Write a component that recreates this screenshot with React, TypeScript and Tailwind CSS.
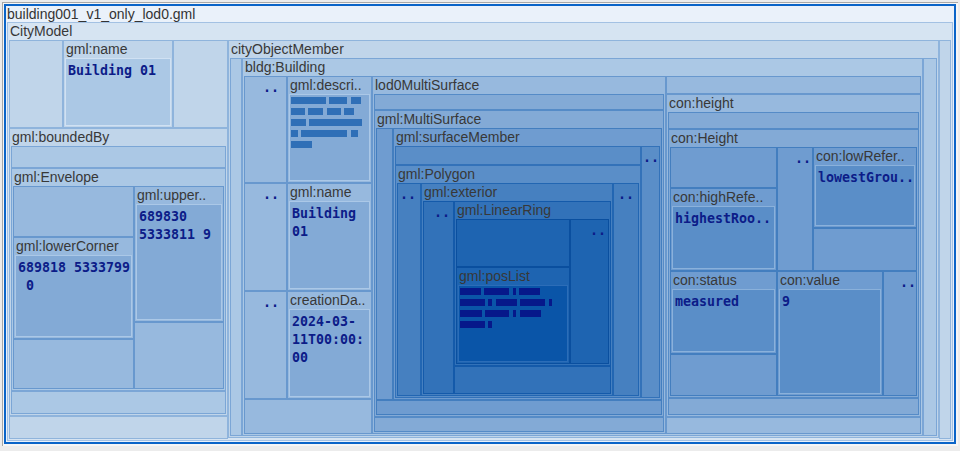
import type { ReactNode } from 'react';

// background / border per nesting depth
const BG = [
  'bg-[#eaf1fa]',
  'bg-[#d6e4f2]',
  'bg-[#c0d5ea]',
  'bg-[#abc8e5]',
  'bg-[#97b9de]',
  'bg-[#83aad6]',
  'bg-[#6f9cd0]',
  'bg-[#5a8ec8]',
  'bg-[#4680c0]',
  'bg-[#3272b9]',
  'bg-[#1e64b1]',
  'bg-[#0a55a8]',
];
const BD = [
  'border-[#0a64c8]',
  'border-[#a3c1e3]',
  'border-[#8fb4dc]',
  'border-[#7ba6d6]',
  'border-[#6898ce]',
  'border-[#558bc7]',
  'border-[#437ebf]',
  'border-[#3372b9]',
  'border-[#2266b2]',
  'border-[#145aaa]',
  'border-[#0a4f9f]',
  'border-[#2a6cb8]',
];
// value boxes get a lighter edge
const VB: Record<number, string> = {
  3: 'border-[#d0e1f3]',
  5: 'border-[#abc8e7]',
  7: 'border-[#8ab1db]',
  11: 'border-[#2c6db8]',
};

const mono = "font-['DejaVu_Sans_Mono',monospace] text-[13.3px] font-bold leading-[18px] text-[#0c1c88]";

function Box({
  d,
  label,
  row = false,
  className = '',
  children,
}: {
  d: number;
  label: string;
  row?: boolean;
  className?: string;
  children?: ReactNode;
}) {
  return (
    <div className={`flex min-h-0 min-w-0 flex-col overflow-hidden border ${BG[d]} ${BD[d]} ${className}`}>
      <div className="h-[17px] overflow-hidden whitespace-nowrap pl-[2px] text-[14px] leading-[17px] text-[#383838]">
        {label}
      </div>
      <div className={`flex min-h-0 flex-1 px-px pb-px ${row ? 'flex-row' : 'flex-col'}`}>{children}</div>
    </div>
  );
}

function Empty({ d, className = '' }: { d: number; className?: string }) {
  return <div className={`min-h-0 min-w-0 border ${BG[d]} ${BD[d]} ${className}`} />;
}

function Dots({ d, className = '', pr = 'pr-[3px]' }: { d: number; className?: string; pr?: string }) {
  return (
    <div className={`flex min-w-0 justify-end overflow-hidden border pt-[2px] ${pr} ${mono} ${BG[d]} ${BD[d]} ${className}`}>
      ..
    </div>
  );
}

function Value({ d, children }: { d: number; children: ReactNode }) {
  return (
    <div className={`min-h-0 flex-1 overflow-hidden whitespace-pre border px-[2px] pt-[3px] ${mono} ${BG[d]} ${VB[d]}`}>
      {children}
    </div>
  );
}

// long text drawn as blocks, the way the map shows it when it is too small
function Greek({ d, rows, color }: { d: number; rows: number[][][]; color: string }) {
  return (
    <div className={`min-h-0 flex-1 overflow-hidden border ${BG[d]} ${VB[d]}`}>
      <svg width="120" height="60" className="block">
        {rows.map((r, i) =>
          r.map(([x, w]) => <rect key={`${i}-${x}`} x={x} y={2 + i * 11} width={w} height={7} fill={color} />),
        )}
      </svg>
    </div>
  );
}

const descRows = [
  [[1, 35], [39, 18], [61, 10]],
  [[1, 14], [18, 15], [37, 14], [54, 10]],
  [[1, 15], [19, 53]],
  [[1, 7], [11, 46], [61, 7]],
  [[1, 21]],
];

const posRows = [
  [[1, 21], [25, 25], [54, 3], [60, 21]],
  [[1, 25], [29, 4], [37, 21], [61, 25], [90, 3]],
  [[1, 22], [26, 24], [54, 3], [61, 21]],
  [[1, 25], [29, 4]],
];

export default function App() {
  return (
    <div className="h-[451px] w-[960px] overflow-hidden bg-[#ececec] pl-[2px] pt-[2px] font-['Liberation_Sans',Arial,sans-serif]">
      <div className="h-[444px] w-[956px] border-l border-t border-[#a8a8a8] bg-[#f6f6f6] pl-px pt-px">
        <div className="flex h-[440px] w-[952px] flex-col border-2 border-[#0a64c8] bg-[#eaf1fa]">
          <div className="h-[16px] pl-px text-[14px] leading-[16px] text-[#333]">building001_v1_only_lod0.gml</div>
          <div className="flex min-h-0 flex-1 px-px pb-px">
            <Box d={1} label="CityModel" row className="flex-1">
              {/* left column */}
              <div className="flex w-[219px] flex-col">
                <div className="flex h-[88px]">
                  <Empty d={2} className="w-[54px]" />
                  <Box d={2} label="gml:name" className="w-[110px]">
                    <Value d={3}>Building 01</Value>
                  </Box>
                  <Empty d={2} className="flex-1" />
                </div>
                <Box d={2} label="gml:boundedBy" className="h-[288px]">
                  <Empty d={3} className="h-[22px]" />
                  <Box d={3} label="gml:Envelope" row className="h-[223px]">
                    <div className="flex w-[121px] flex-col">
                      <Empty d={4} className="h-[51px]" />
                      <Box d={4} label="gml:lowerCorner" className="h-[102px]">
                        <Value d={5}>{'689818 5333799\n 0'}</Value>
                      </Box>
                      <Empty d={4} className="flex-1" />
                    </div>
                    <div className="flex min-w-0 flex-1 flex-col">
                      <Box d={4} label="gml:upper.." className="h-[136px]">
                        <Value d={5}>{'689830\n5333811 9'}</Value>
                      </Box>
                      <Empty d={4} className="flex-1" />
                    </div>
                  </Box>
                  <Empty d={3} className="flex-1" />
                </Box>
                <Empty d={2} className="flex-1" />
              </div>

              {/* cityObjectMember */}
              <div className="flex w-[711px] flex-col">
                <Box d={2} label="cityObjectMember" row className="h-[398px]">
                  <Empty d={3} className="w-[12px]" />
                  <Box d={3} label="bldg:Building" row className="w-[681px]">
                    <div className="flex w-[128px] flex-col">
                      <div className="flex h-[107px]">
                        <Dots d={4} className="w-[43px]" pr="pr-[7px]" />
                        <Box d={4} label="gml:descri.." className="flex-1">
                          <Greek d={5} rows={descRows} color="#2f6fb7" />
                        </Box>
                      </div>
                      <div className="flex h-[108px]">
                        <Dots d={4} className="w-[43px]" pr="pr-[7px]" />
                        <Box d={4} label="gml:name" className="flex-1">
                          <Value d={5}>{'Building\n01'}</Value>
                        </Box>
                      </div>
                      <div className="flex h-[108px]">
                        <Dots d={4} className="w-[43px]" pr="pr-[7px]" />
                        <Box d={4} label="creationDa.." className="flex-1">
                          <Value d={5}>{'2024-03-\n11T00:00:\n00'}</Value>
                        </Box>
                      </div>
                      <Empty d={4} className="flex-1" />
                    </div>

                    <Box d={4} label="lod0MultiSurface" className="w-[294px]">
                      <Empty d={5} className="h-[16px]" />
                      <Box d={5} label="gml:MultiSurface" className="h-[307px]">
                        <div className="flex h-[272px]">
                          <Empty d={6} className="w-[17px]" />
                          <Box d={6} label="gml:surfaceMember" row className="flex-1">
                            <div className="flex w-[246px] flex-col">
                              <Empty d={7} className="h-[19px]" />
                              <Box d={7} label="gml:Polygon" row className="flex-1">
                                <Dots d={8} className="w-[24px]" pr="pr-[4px]" />
                                <Box d={8} label="gml:exterior" row className="w-[192px]">
                                  <Dots d={9} className="w-[31px]" pr="pr-[3px]" />
                                  <div className="flex min-w-0 flex-1 flex-col">
                                    <Box d={9} label="gml:LinearRing" row className="h-[165px]">
                                      <div className="flex w-[114px] flex-col">
                                        <Empty d={10} className="h-[48px]" />
                                        <Box d={10} label="gml:posList" className="flex-1">
                                          <Greek d={11} rows={posRows} color="#06188a" />
                                        </Box>
                                      </div>
                                      <Dots d={10} className="flex-1" pr="pr-[2px]" />
                                    </Box>
                                    <Empty d={9} className="flex-1" />
                                  </div>
                                </Box>
                                <Dots d={8} className="flex-1" pr="pr-[4px]" />
                              </Box>
                            </div>
                            <Dots d={7} className="flex-1" pr="pr-0" />
                          </Box>
                        </div>
                        <Empty d={6} className="flex-1" />
                      </Box>
                      <Empty d={5} className="flex-1" />
                    </Box>

                    <div className="flex min-w-0 flex-1 flex-col">
                      <Empty d={4} className="h-[18px]" />
                      <Box d={4} label="con:height" className="h-[323px]">
                        <Empty d={5} className="h-[17px]" />
                        <Box d={5} label="con:Height" className="h-[269px]">
                          <div className="flex h-[124px]">
                            <div className="flex w-[107px] flex-col">
                              <Empty d={6} className="h-[41px]" />
                              <Box d={6} label="con:highRefe.." className="flex-1">
                                <Value d={7}>highestRoo..</Value>
                              </Box>
                            </div>
                            <Dots d={6} className="w-[36px]" pr="pr-px" />
                            <div className="flex min-w-0 flex-1 flex-col">
                              <Box d={6} label="con:lowRefer.." className="h-[81px]">
                                <Value d={7}>lowestGrou..</Value>
                              </Box>
                              <Empty d={6} className="flex-1" />
                            </div>
                          </div>
                          <div className="flex min-h-0 flex-1">
                            <div className="flex w-[107px] flex-col">
                              <Box d={6} label="con:status" className="h-[83px]">
                                <Value d={7}>measured</Value>
                              </Box>
                              <Empty d={6} className="flex-1" />
                            </div>
                            <Box d={6} label="con:value" className="w-[106px]">
                              <Value d={7}>9</Value>
                            </Box>
                            <Dots d={6} className="flex-1" pr="pr-0" />
                          </div>
                        </Box>
                        <Empty d={5} className="flex-1" />
                      </Box>
                      <Empty d={4} className="flex-1" />
                    </div>
                  </Box>
                  <Empty d={3} className="flex-1" />
                </Box>
              </div>
              <Empty d={2} className="flex-1" />
            </Box>
          </div>
        </div>
      </div>
    </div>
  );
}
